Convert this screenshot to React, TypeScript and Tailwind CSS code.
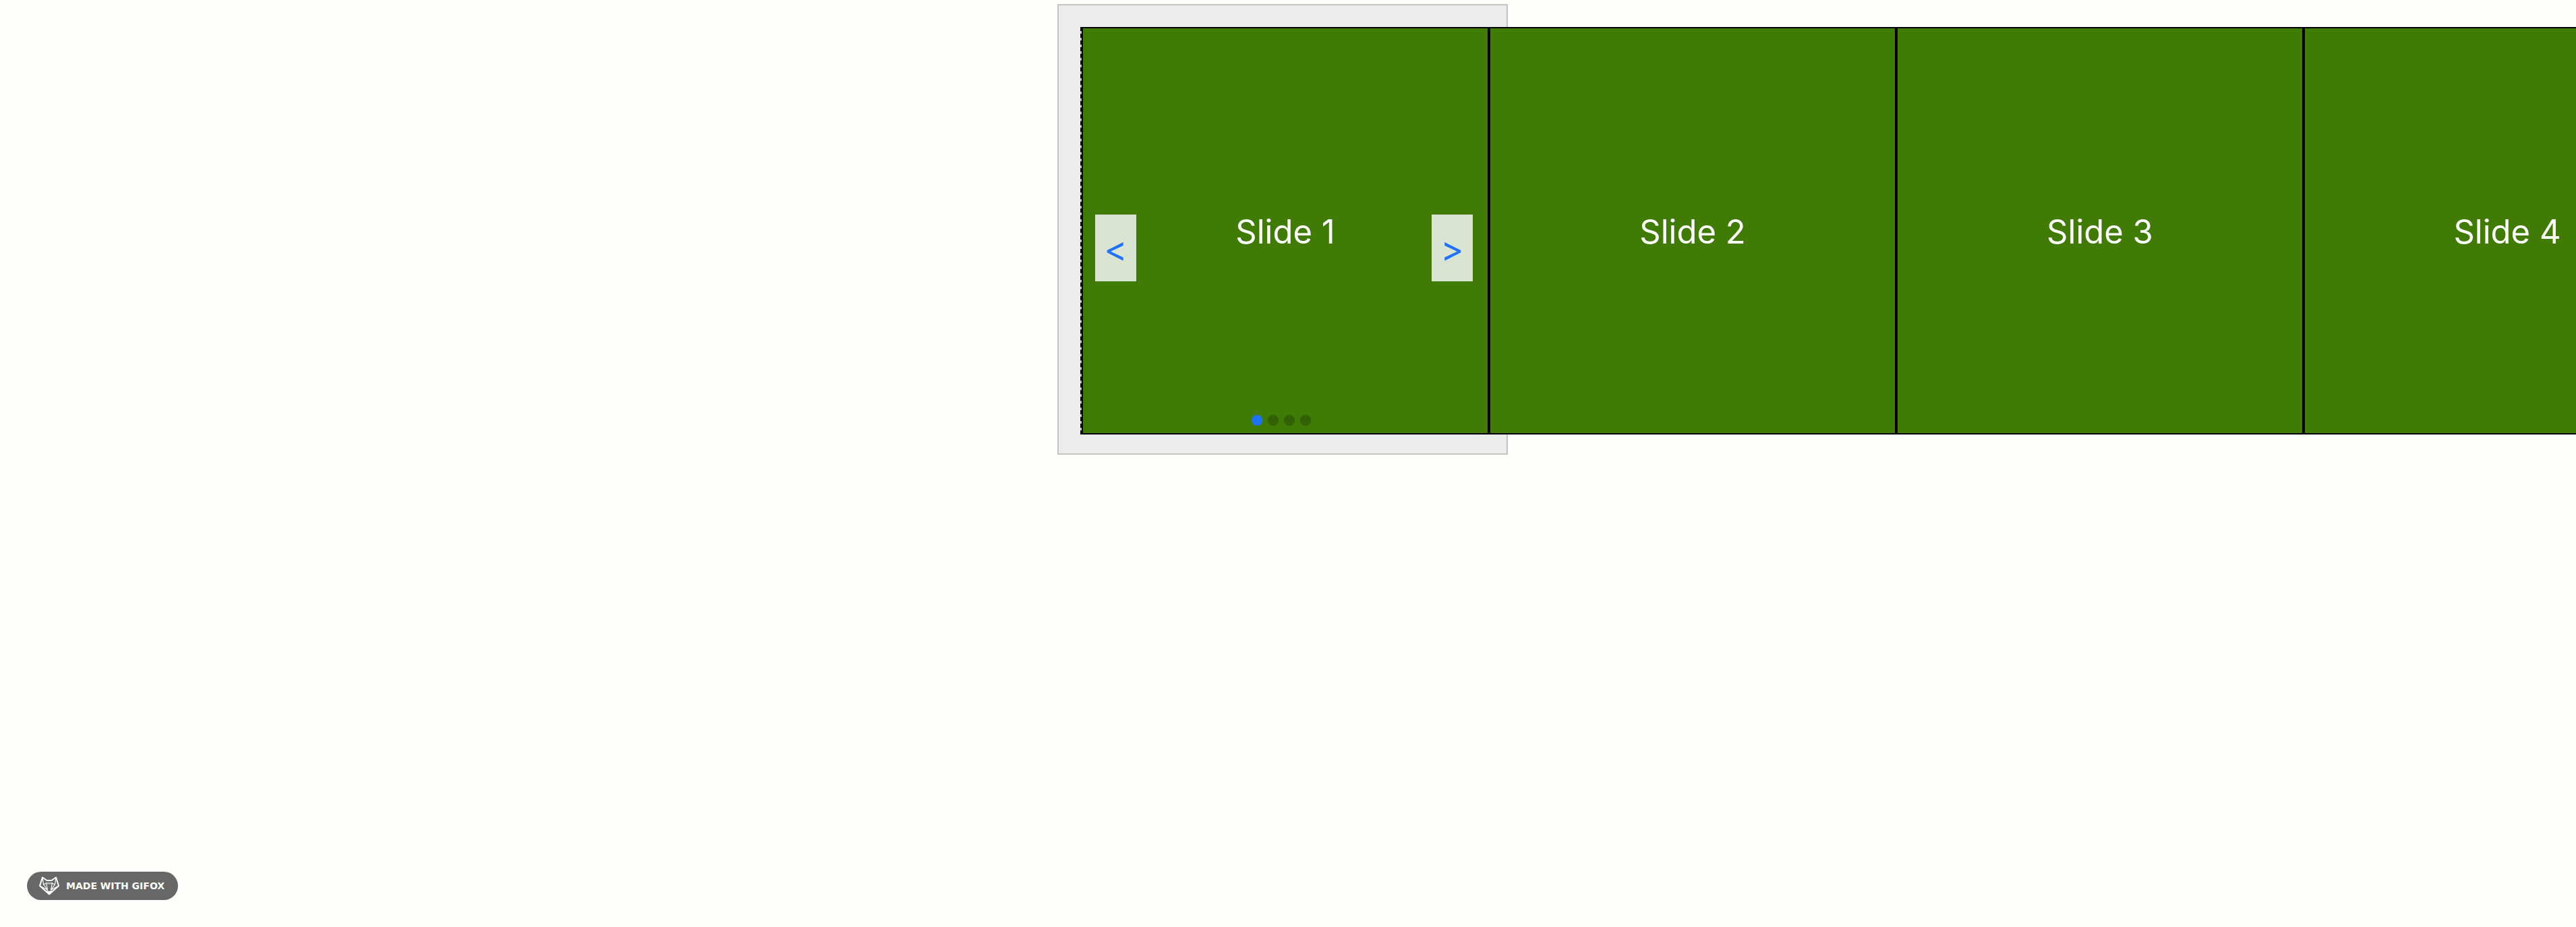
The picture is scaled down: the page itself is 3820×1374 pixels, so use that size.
const SLIDES = ['Slide 1', 'Slide 2', 'Slide 3', 'Slide 4'];

function ArrowButton({ label, glyph, side }: { label: string; glyph: string; side: string }) {
  return (
    <button
      type="button"
      aria-label={label}
      className={`absolute top-[278px] flex h-[99px] w-[61px] items-center justify-center bg-[#dae4d2] pt-0.5 text-[52px] leading-none text-[#1f72ff] ${side}`}
    >
      {glyph}
    </button>
  );
}

function FoxLogo() {
  return (
    <svg viewBox="0 0 30 28" className="h-7 w-[30px]" fill="none" stroke="#fff" strokeLinejoin="round" aria-hidden="true">
      <path d="M5 1.5 L11.5 6 H18.5 L25 1.5 L29 14 L15 26.5 L1 14 Z" strokeWidth="2" />
      <path d="M5 1.5 L6.5 12 L12 9.5 M25 1.5 L23.5 12 L18 9.5 M6.5 12 L12.5 20 L10.5 9 M23.5 12 L17.5 20 L19.5 9 M2 14.5 L12.5 20 M28 14.5 L17.5 20" strokeWidth="1.2" />
      <path d="M11 9 H19 L18 11.5 H12 Z" fill="#b4bab8" stroke="none" />
      <path d="M10.5 20.5 L15 22 L19.5 20.5 L15 26.5 Z" fill="#fff" stroke="none" />
    </svg>
  );
}

export default function App() {
  return (
    <div className="flex min-h-screen flex-col justify-between overflow-hidden bg-[#fefefd] font-['Inter',sans-serif]">
      <main className="flex justify-center pt-1.5 pr-4">
        <section aria-label="Carousel" className="border-2 border-[#c3c3c3] bg-[#ececec] p-8">
          <div className="relative size-[600px]">
            <div className="flex w-max border-l-2 border-dashed border-black bg-[#c3c3c3]">
              {SLIDES.map((slide) => (
                <div
                  key={slide}
                  className="flex size-[604px] shrink-0 items-center justify-center border-2 border-solid border-black bg-[#3f7b05] pt-0.5 text-[49px] leading-none text-white"
                >
                  {slide}
                </div>
              ))}
            </div>
            <ArrowButton label="Previous slide" glyph="<" side="left-[22px]" />
            <ArrowButton label="Next slide" glyph=">" side="right-[18px]" />
            <div className="absolute inset-x-0 top-[575px] flex justify-center gap-2 pr-1">
              {SLIDES.map((slide, i) => (
                <button
                  key={slide}
                  type="button"
                  aria-label={`Go to ${slide}`}
                  className={`size-4 rounded-full ${i === 0 ? 'bg-[#1f72ff]' : 'bg-[#316104]'}`}
                />
              ))}
            </div>
          </div>
        </section>
      </main>
      <footer className="px-10 pb-10">
        <div className="flex h-[42px] w-max items-center gap-2.5 rounded-full bg-[#676767] pr-5 pl-[18px] font-['DejaVu_Sans',sans-serif] text-sm font-bold text-white">
          <FoxLogo />
          <span>MADE WITH GIFOX</span>
        </div>
      </footer>
    </div>
  );
}
